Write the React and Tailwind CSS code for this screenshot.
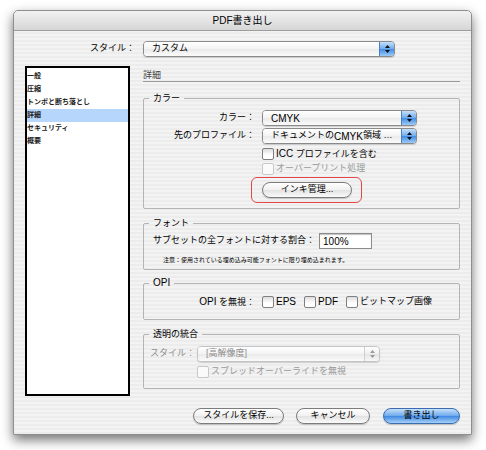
import React from 'react';

const font = "font-['Liberation_Sans','Noto_Sans_CJK_JP',sans-serif]";

const Arrows = ({ disabled }) => (
  <svg width="7" height="10" viewBox="0 0 7 10">
    <path d="M3.5 1 L6 4 L1 4 Z M1 6 L6 6 L3.5 9 Z" fill={disabled ? '#9a9a9a' : '#111'} />
  </svg>
);

const Popup = ({ children, width, disabled }) => (
  <div
    className={`flex h-[16px] shrink-0 rounded-[4px] border ${
      disabled ? 'border-[#c4c4c4] text-[#8c8c8c]' : 'border-[#8a8a8a] text-black'
    } ${width} shadow-[0_1px_1px_rgba(0,0,0,0.15)]`}
  >
    <div className="flex flex-1 items-center overflow-hidden rounded-l-[3px] bg-[linear-gradient(#ffffff,#f3f3f3_50%,#e9e9e9_50%,#fbfbfb)] pl-[8px] text-[9px] whitespace-nowrap">
      {children}
    </div>
    <div
      className={`flex w-[15px] items-center justify-center rounded-r-[3px] border-l ${
        disabled
          ? 'border-[#d0d0d0] bg-[linear-gradient(#ffffff,#efefef_50%,#e4e4e4_50%,#f8f8f8)]'
          : 'border-[#4a7fc4] bg-[linear-gradient(#c4e0fb,#6eaaec_50%,#3f8ae4_50%,#9ccbf7)]'
      }`}
    >
      <Arrows disabled={disabled} />
    </div>
  </div>
);

const Check = ({ label, disabled }) => (
  <div className={`flex items-center gap-[2px] text-[9px] ${disabled ? 'text-[#9a9a9a]' : 'text-black'}`}>
    <div
      className={`h-[12px] w-[12px] shrink-0 rounded-[2px] border ${
        disabled ? 'border-[#c8c8c8] bg-[#fafafa]' : 'border-[#7f7f7f] bg-[linear-gradient(#dcdcdc,#ffffff_60%)]'
      }`}
    />
    <span className="whitespace-nowrap">{label}</span>
  </div>
);

const Button = ({ children, width, primary }) => (
  <div
    className={`flex h-[16px] items-center justify-center rounded-full border text-[9px] ${width} ${
      primary
        ? 'border-[#3a6cb0] bg-[linear-gradient(#c6e1fb,#6ba8ec_50%,#3d87e2_50%,#a6d1f8)] text-black'
        : 'border-[#7c7c7c] bg-[linear-gradient(#ffffff,#f0f0f0_50%,#e2e2e2_50%,#fafafa)] text-black'
    } shadow-[0_1px_1px_rgba(0,0,0,0.2)]`}
  >
    {children}
  </div>
);

const Group = ({ title, className, children }) => (
  <fieldset className={`rounded-[2px] border border-[#b4b4b4] ${className}`}>
    <legend className="ml-[5px] px-[4px] text-[9px] leading-[14px] text-black">{title}</legend>
    {children}
  </fieldset>
);

const sections = ['一般', '圧縮', 'トンボと断ち落とし', '詳細', 'セキュリティ', '概要'];

export default function App() {
  return (
    <div className={`h-[450px] w-[486px] overflow-hidden bg-white pt-[10px] pl-[13px] ${font}`}>
      <div className="flex h-[425px] w-[459px] flex-col rounded-t-[5px] border border-[#8e8e8e] bg-[repeating-linear-gradient(0deg,#ececec_0px,#ececec_2px,#f3f3f3_2px,#f3f3f3_4px)] shadow-[0_5px_12px_rgba(0,0,0,0.55)]">
        {/* title bar */}
        <div className="flex h-[20px] shrink-0 items-center justify-center rounded-t-[5px] border-b border-[#9c9c9c] bg-[linear-gradient(#f2f2f2,#d6d6d6)] text-[10px] text-black">
          PDF書き出し
        </div>

        <div className="flex flex-col px-[11px] pt-[10px]">
          {/* style */}
          <div className="flex h-[16px] items-center gap-[8px]">
            <div className="w-[110px] text-right text-[9px] text-black">スタイル：</div>
            <Popup width="w-[252px]">カスタム</Popup>
          </div>

          <div className="mt-[9px] flex gap-[13px]">
            {/* list */}
            <div className="h-[330px] w-[105px] shrink-0 border-2 border-black bg-white pt-[2px]">
              {sections.map((s) => (
                <div
                  key={s}
                  className={`flex h-[13px] items-center text-[7px] font-bold text-[#222] ${
                    s === '詳細' ? 'bg-[#b7d6fb]' : ''
                  }`}
                >
                  {s}
                </div>
              ))}
            </div>

            {/* right column */}
            <div className="flex w-[317px] flex-col">
              <div className="h-[16px] border-b border-[#9a9a9a] pt-[4px] text-[9px] leading-[10px] text-[#444]">詳細</div>

              <Group title="カラー" className="mt-[9px] pb-[5px]">
                <div className="mt-[5px] flex items-center gap-[7px]">
                  <div className="w-[111px] text-right text-[9px]">カラー：</div>
                  <Popup width="w-[155px]">
                    <span className="text-[10px]">CMYK</span>
                  </Popup>
                </div>
                <div className="mt-[2px] flex items-center gap-[7px]">
                  <div className="w-[111px] text-right text-[9px]">先のプロファイル：</div>
                  <Popup width="w-[155px]">
                    ドキュメントの<span className="text-[10px]">CMYK</span>領域 …
                  </Popup>
                </div>
                <div className="mt-[3px] flex h-[14px] items-center pl-[118px]">
                  <Check label={<><span className="text-[10px]">ICC</span> プロファイルを含む</>} />
                </div>
                <div className="mt-[1px] flex h-[14px] items-center pl-[118px]">
                  <Check label="オーバープリント処理" disabled />
                </div>
                <div className="mt-[1px] pl-[107px]">
                  <div className="w-[111px] rounded-[6px] border border-[#e04848] px-[10px] py-[4px]">
                    <Button width="w-[90px]">インキ管理...</Button>
                  </div>
                </div>
              </Group>

              <Group title="フォント" className="mt-[7px] pb-[3px]">
                <div className="mt-[3px] flex items-center gap-[4px] pl-[9px]">
                  <span className="text-[9px] whitespace-nowrap">サブセットの全フォントに対する割合：</span>
                  <div className="flex h-[16px] w-[53px] items-center border border-[#8c8c8c] bg-white pl-[3px] text-[10px] shadow-[inset_0_1px_1px_rgba(0,0,0,0.25)]">
                    100%
                  </div>
                </div>
                <div className="mt-[5px] flex h-[12px] items-center pl-[19px] text-[6px] whitespace-nowrap">
                  注意：使用されている埋め込み可能フォントに限り埋め込まれます。
                </div>
              </Group>

              <Group title={<span className="text-[10px]">OPI</span>} className="mt-[6px] pb-[10px]">
                <div className="mt-[5px] flex h-[14px] items-center gap-[7px]">
                  <div className="w-[111px] text-right text-[9px]">
                    <span className="text-[10px]">OPI</span> を無視：
                  </div>
                  <div className="flex items-center gap-[8px]">
                    <Check label={<span className="text-[10px]">EPS</span>} />
                    <Check label={<span className="text-[10px]">PDF</span>} />
                    <Check label="ビットマップ画像" />
                  </div>
                </div>
              </Group>

              <Group title="透明の統合" className="mt-[7px] pb-[9px]">
                <div className="mt-[5px] flex items-center pl-[6px]">
                  <div className="w-[47px] text-[9px] text-[#8c8c8c]">スタイル：</div>
                  <Popup width="w-[183px]" disabled>[高解像度]</Popup>
                </div>
                <div className="mt-[3px] flex h-[14px] items-center pl-[53px]">
                  <Check label="スプレッドオーバーライドを無視" disabled />
                </div>
              </Group>
            </div>
          </div>

          {/* buttons */}
          <div className="mt-[12px] flex justify-end">
            <Button width="w-[91px]">スタイルを保存...</Button>
            <div className="ml-[12px]">
              <Button width="w-[74px]">キャンセル</Button>
            </div>
            <div className="ml-[13px]">
              <Button width="w-[77px]" primary>書き出し</Button>
            </div>
          </div>
        </div>
      </div>
    </div>
  );
}
